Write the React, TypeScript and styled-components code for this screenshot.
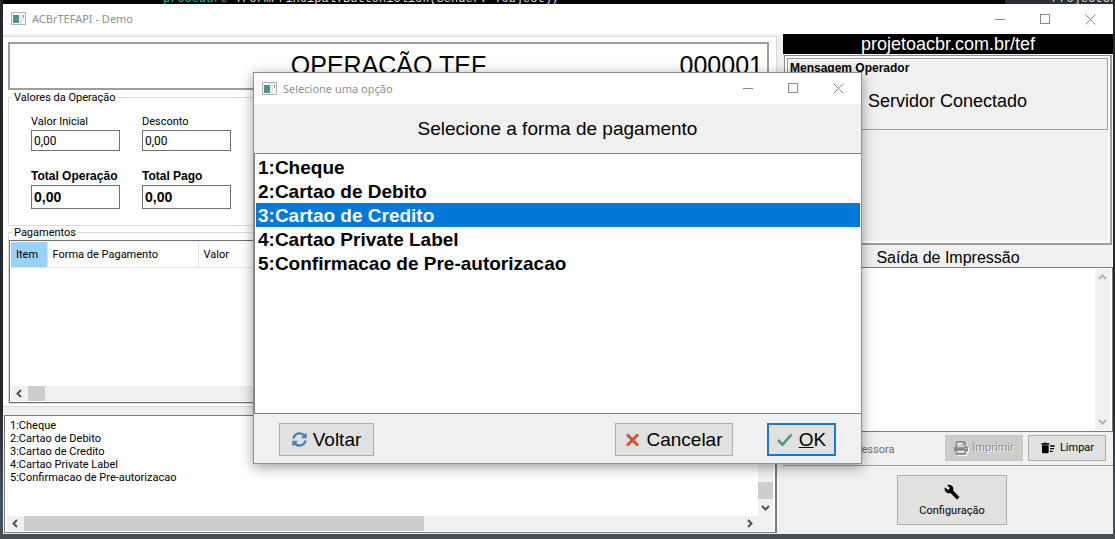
import React, { useState } from "react";
import styled, { createGlobalStyle, css } from "styled-components";
import { FaPrint, FaSyncAlt } from "react-icons/fa";
import { MdBuild, MdDeleteSweep } from "react-icons/md";

const ui = `Roboto, "Open Sans", sans-serif`;
const caption = `"Noto Sans", "Open Sans", sans-serif`;
const sans = `"Liberation Sans", Arial, sans-serif`;
const mono = `"Liberation Mono", monospace`;

const GlobalStyle = createGlobalStyle`
  * { box-sizing: border-box; }
  body { margin: 0; background: #43505a; color: #000; font: 11px/13px ${ui}; }
  button, input, textarea { font: inherit; color: inherit; margin: 0; border-radius: 0; }
`;

const Desktop = styled.div`
  display: flex;
  flex-direction: column;
  min-height: 100vh;
  padding: 0 2px 5px 3px;
  background: linear-gradient(#24262b, #25282d 75%, #43505a 92%);
`;

const EditorStrip = styled.div`
  display: flex;
  align-items: flex-end;
  height: 4px;
  overflow: hidden;
  padding-left: 160px;
  background: #050505;
  color: #d8d8d8;
  font: 12px/10px ${mono};
  white-space: pre;
`;

const Keyword = styled.span`
  color: #22b8a4;
`;

const ProjectTab = styled.span`
  margin-left: auto;
  width: 108px;
  padding-left: 47px;
  background: #2b3038;
`;

const MainWindow = styled.main`
  position: relative;
  flex: 1;
  display: flex;
  flex-direction: column;
  background: #f0f0f0;
`;

const TitleBar = styled.header<{ $compact?: boolean }>`
  display: flex;
  align-items: center;
  gap: 5px;
  height: ${(p) => (p.$compact ? 31 : 30)}px;
  padding-left: 8px;
  background: #fff;
  color: #8f8f8f;
  font: 11px/16px ${caption};
`;

const TitleText = styled.h1`
  flex: 1;
  margin: 0;
  font: inherit;
`;

const CaptionGroup = styled.div`
  display: flex;
`;

const CaptionButton = styled.button`
  display: flex;
  justify-content: center;
  width: 45px;
  padding: 0;
  border: 0;
  background: none;
  color: #8a8a8a;
`;

const Body = styled.div`
  flex: 1;
  display: flex;
  gap: 6px;
`;

const LeftColumn = styled.div`
  flex: 1;
  display: flex;
  flex-direction: column;
  gap: 8px;
  padding: 2px 0 1px;
`;

const RightColumn = styled.aside`
  flex: 0 0 330px;
  display: flex;
  flex-direction: column;
`;

const Sheet = styled.section`
  flex: 1;
  display: flex;
  flex-direction: column;
  padding: 5px 7px 2px 5px;
  border: 1px solid #dadada;
  border-left: 0;
  background: #fff;
`;

const OperationBanner = styled.div`
  display: grid;
  grid-template-columns: 1fr auto 1fr;
  height: 48px;
  padding: 6px 4px 0;
  border: 2px solid #9d9d9d;
  font: 25px/30px ${sans};
`;

const OperationNumber = styled.span`
  text-align: right;
`;

const Group = styled.fieldset<{ $grow?: boolean }>`
  min-width: 0;
  margin: 0;
  padding: 0;
  border: 1px solid #dcdcdc;
  ${(p) =>
    p.$grow
      ? css`
          flex: 1;
          display: flex;
          flex-direction: column;
          padding-top: 1px;
        `
      : css`
          height: 135px;
          margin-top: 1px;
        `}
`;

const Legend = styled.legend`
  margin-left: 3px;
  padding: 0 2px;
`;

const FieldRow = styled.div<{ $total?: boolean }>`
  display: flex;
  gap: 22px;
  padding: ${(p) => (p.$total ? 18 : 11)}px 22px 0;
`;

const Field = styled.label<{ $total?: boolean }>`
  display: flex;
  flex-direction: column;
  gap: 2px;
  width: 89px;
  white-space: nowrap;
  font: ${(p) => (p.$total ? `bold 12px/14px ${sans}` : `11px/13px ${ui}`)};
`;

const FieldInput = styled.input<{ $total?: boolean }>`
  width: 100%;
  height: ${(p) => (p.$total ? 24 : 21)}px;
  padding: 0 2px;
  border: 1px solid #707070;
  background: #fff;
  font-size: ${(p) => (p.$total ? 14 : 12)}px;
`;

const GridFrame = styled.div`
  flex: 1;
  display: flex;
  flex-direction: column;
  justify-content: space-between;
  padding: 1px;
  border: 1px solid #6e6e6e;
`;

const PaymentsTable = styled.table`
  width: 100%;
  border-collapse: collapse;
  table-layout: fixed;
`;

const HeadCell = styled.th<{ $width?: number; $active?: boolean }>`
  width: ${(p) => (p.$width ? `${p.$width}px` : "auto")};
  height: 25px;
  padding: 0 5px;
  border-right: 1px solid #e5e5e5;
  border-bottom: 1px solid #e5e5e5;
  background: ${(p) => (p.$active ? "#99d1ff" : "#fff")};
  font-weight: normal;
  text-align: left;
  white-space: nowrap;
`;

const HScroll = styled.div`
  display: flex;
  align-items: center;
  height: 15px;
  background: #f0f0f0;
`;

const VScroll = styled.div`
  display: flex;
  flex-direction: column;
  align-items: center;
  width: 15px;
  background: #f0f0f0;
`;

const Thumb = styled.span<{ $w: number; $h: number }>`
  width: ${(p) => p.$w}px;
  height: ${(p) => p.$h}px;
  background: #cdcdcd;
`;

const Spacer = styled.span`
  flex: 1;
`;

const ScrollButton = styled.button<{ $dim?: boolean }>`
  display: flex;
  align-items: center;
  justify-content: center;
  width: 17px;
  height: 17px;
  padding: 0;
  border: 0;
  background: none;
  color: ${(p) => (p.$dim ? "#b4b4b4" : "#505050")};
`;

const LogFrame = styled.section`
  display: grid;
  grid-template: 1fr 15px / 1fr 15px;
  height: 118px;
  margin-left: 1px;
  padding: 1px 2px;
  border: 1px solid #7a7a7a;
  border-right-width: 2px;
  background: #fff;
`;

const LogText = styled.textarea`
  padding: 2px 3px;
  border: 0;
  background: #fff;
  resize: none;
  overflow: hidden;
  outline: 0;
`;

const Corner = styled.span`
  background: #f0f0f0;
`;

const SiteLink = styled.a`
  height: 20px;
  background: #000;
  color: #fff;
  font: 18px/20px ${sans};
  text-align: center;
  text-decoration: none;
`;

const MessageFrame = styled.section`
  height: 190px;
  margin: 1px 1px 0;
  padding: 2px;
  border: 1px solid #8c8c8c;
  border-right: 2px solid #9d9d9d;
  border-bottom: 2px solid #9d9d9d;
  box-shadow: inset 0 0 0 2px #fff;
`;

const MessageBox = styled.div`
  height: 72px;
  padding: 2px 2px 0;
  border: 1px solid #9d9d9d;
  box-shadow: inset 1px 1px #fff;
`;

const MessageTitle = styled.h2`
  margin: 0;
  font: bold 12px/14px ${sans};
`;

const MessageText = styled.p`
  margin: 14px 0 0;
  font: 18px/24px ${sans};
  text-align: center;
`;

const PrintTitle = styled.h2`
  margin: 0;
  height: 22px;
  font: 16px/25px ${sans};
  text-align: center;
`;

const PrintArea = styled.div`
  flex: 1;
  display: flex;
  padding: 1px 2px;
  border: 1px solid #7a7a7a;
  background: #fff;
`;

const PrintText = styled(LogText)`
  flex: 1;
`;

const PrintBar = styled.div`
  display: flex;
  align-items: center;
  gap: 5px;
  height: 34px;
  padding: 0 7px 2px 0;
  border-bottom: 1px solid #9d9d9d;
`;

const PrinterName = styled.span`
  flex: 1;
  padding: 4px 0 0 56px;
  color: #6d6d6d;
`;

const ToolButton = styled.button`
  display: flex;
  align-items: center;
  justify-content: center;
  gap: 4px;
  width: 78px;
  height: 26px;
  padding: 0;
  border: 1px solid #adadad;
  background: #e1e1e1;
  &:disabled {
    border-color: #c6c6c6;
    background: #cccccc;
    color: #8b8b8b;
    text-shadow: 1px 1px #fff;
  }
  &:disabled svg {
    filter: drop-shadow(1px 1px #fff);
  }
`;

const ConfigBar = styled.div`
  display: flex;
  justify-content: center;
  padding: 9px 0 9px 8px;
`;

const ConfigButton = styled(ToolButton)`
  flex-direction: column;
  gap: 4px;
  width: 110px;
  height: 50px;
`;

const Dialog = styled.section`
  position: absolute;
  top: 68px;
  right: 251px;
  bottom: 70px;
  left: 250px;
  display: flex;
  flex-direction: column;
  border: 1px solid #8f8f8f;
  background: #f0f0f0;
  box-shadow: 0 3px 12px rgba(0, 0, 0, 0.4);
`;

const Prompt = styled.h2`
  margin: 0;
  height: 49px;
  font: 19px/49px ${sans};
  text-align: center;
`;

const OptionList = styled.div`
  flex: 1;
  padding: 1px;
  border-top: 1px solid #828282;
  border-bottom: 1px solid #828282;
  border-left: 1px solid #828282;
  background: #fff;
`;

const Option = styled.label`
  display: block;
  height: 24px;
  padding-left: 2px;
  font: bold 19px/26px ${sans};
  &:has(input:checked) {
    background: #0078d7;
    color: #fff;
  }
`;

const OptionRadio = styled.input`
  position: absolute;
  opacity: 0;
  pointer-events: none;
`;

const DialogFooter = styled.footer`
  display: flex;
  align-items: center;
  gap: 34px;
  height: 49px;
  padding: 2px 25px 0;
`;

const DialogButton = styled.button<{ $width: number; $default?: boolean }>`
  display: flex;
  align-items: center;
  justify-content: center;
  gap: 6px;
  width: ${(p) => p.$width}px;
  height: 33px;
  padding: 0;
  border: ${(p) => (p.$default ? "2px solid #1c78c4" : "1px solid #adadad")};
  background: #e1e1e1;
  font: 19px/24px ${sans};
`;

function AppIcon() {
  return (
    <svg width="16" height="14" viewBox="0 0 16 14" aria-hidden="true">
      <rect x="0.5" y="0.5" width="14" height="12" fill="#f4f6f7" stroke="#a9b3b9" />
      <rect x="2" y="3" width="6" height="8" fill="#4f8f8c" />
      <rect x="9" y="3" width="2" height="8" fill="#dfe5e8" />
      <rect x="12" y="3" width="1" height="3" fill="#8e9aa2" />
    </svg>
  );
}

function CaptionButtons() {
  return (
    <CaptionGroup>
      <CaptionButton aria-label="Minimizar">
        <svg width="11" height="11"><path d="M0 5.5H10" stroke="currentColor" /></svg>
      </CaptionButton>
      <CaptionButton aria-label="Maximizar">
        <svg width="11" height="11"><rect x="0.5" y="0.5" width="9" height="9" fill="none" stroke="currentColor" /></svg>
      </CaptionButton>
      <CaptionButton aria-label="Fechar">
        <svg width="11" height="11"><path d="M0.5 0.5L10.5 10.5M10.5 0.5L0.5 10.5" fill="none" stroke="currentColor" /></svg>
      </CaptionButton>
    </CaptionGroup>
  );
}

const chevrons = {
  left: "M6 1L2.5 4.5L6 8",
  right: "M3 1L6.5 4.5L3 8",
  up: "M1 6L4.5 2.5L8 6",
  down: "M1 3L4.5 6.5L8 3",
};

const arrowNames = {
  left: "Rolar à esquerda",
  right: "Rolar à direita",
  up: "Rolar acima",
  down: "Rolar abaixo",
};

function Arrow({ to, dim }: { to: keyof typeof chevrons; dim?: boolean }) {
  return (
    <ScrollButton $dim={dim} aria-label={arrowNames[to]}>
      <svg width="9" height="9">
        <path d={chevrons[to]} fill="none" stroke="currentColor" strokeWidth="2" />
      </svg>
    </ScrollButton>
  );
}

const options = [
  "1:Cheque",
  "2:Cartao de Debito",
  "3:Cartao de Credito",
  "4:Cartao Private Label",
  "5:Confirmacao de Pre-autorizacao",
];

function OperationValues() {
  return (
    <Group>
      <Legend>Valores da Operação</Legend>
      <FieldRow>
        <Field>Valor Inicial<FieldInput defaultValue="0,00" /></Field>
        <Field>Desconto<FieldInput defaultValue="0,00" /></Field>
      </FieldRow>
      <FieldRow $total>
        <Field $total>Total Operação<FieldInput $total readOnly value="0,00" /></Field>
        <Field $total>Total Pago<FieldInput $total readOnly value="0,00" /></Field>
      </FieldRow>
    </Group>
  );
}

function Payments() {
  return (
    <Group $grow>
      <Legend>Pagamentos</Legend>
      <GridFrame>
        <PaymentsTable>
          <thead>
            <tr>
              <HeadCell $width={36} $active>Item</HeadCell>
              <HeadCell $width={151}>Forma de Pagamento</HeadCell>
              <HeadCell>Valor</HeadCell>
            </tr>
          </thead>
        </PaymentsTable>
        <HScroll>
          <Arrow to="left" />
          <Thumb $w={17} $h={15} />
          <Spacer />
          <Arrow to="right" />
        </HScroll>
      </GridFrame>
    </Group>
  );
}

function OptionDialog() {
  const [choice, setChoice] = useState(2);
  return (
    <Dialog role="dialog" aria-label="Selecione uma opção">
      <TitleBar $compact>
        <AppIcon />
        <TitleText as="h2">Selecione uma opção</TitleText>
        <CaptionButtons />
      </TitleBar>
      <Prompt>Selecione a forma de pagamento</Prompt>
      <OptionList role="radiogroup" aria-label="Forma de pagamento">
        {options.map((text, i) => (
          <Option key={text}>
            <OptionRadio type="radio" name="forma" checked={choice === i} onChange={() => setChoice(i)} />
            {text}
          </Option>
        ))}
      </OptionList>
      <DialogFooter>
        <DialogButton $width={95}>
          <FaSyncAlt size={15} color="#4d7fb0" />
          Voltar
        </DialogButton>
        <Spacer />
        <DialogButton $width={118}>
          <svg width="15" height="14" viewBox="0 0 15 14">
            <path d="M2 1.5L13 12.5M13 1.5L2 12.5" stroke="#cf5337" strokeWidth="3" />
          </svg>
          Cancelar
        </DialogButton>
        <DialogButton $width={69} $default>
          <svg width="16" height="14" viewBox="0 0 16 14">
            <path d="M1 7L5.500 11.500L14.500 1.500" fill="none" stroke="#4b9c7c" strokeWidth="2.600" />
          </svg>
          <span><u>O</u>K</span>
        </DialogButton>
      </DialogFooter>
    </Dialog>
  );
}

export default function App() {
  return (
    <Desktop>
      <GlobalStyle />
      <EditorStrip aria-hidden="true">
        <Keyword>procedure</Keyword> TFormPrincipal.Button1Click(Sender: TObject);
        <ProjectTab>ProjectGroup</ProjectTab>
      </EditorStrip>
      <MainWindow>
        <TitleBar>
          <AppIcon />
          <TitleText>ACBrTEFAPI - Demo</TitleText>
          <CaptionButtons />
        </TitleBar>
        <Body>
          <LeftColumn>
            <Sheet>
              <OperationBanner>
                <span />
                <span>OPERAÇÃO TEF</span>
                <OperationNumber>000001</OperationNumber>
              </OperationBanner>
              <OperationValues />
              <Payments />
            </Sheet>
            <LogFrame>
              <LogText readOnly aria-label="Log" value={options.join("\n")} />
              <VScroll>
                <Arrow to="up" />
                <Spacer />
                <Thumb $w={15} $h={17} />
                <Arrow to="down" />
              </VScroll>
              <HScroll>
                <Arrow to="left" />
                <Thumb $w={400} $h={15} />
                <Spacer />
                <Arrow to="right" />
              </HScroll>
              <Corner />
            </LogFrame>
          </LeftColumn>
          <RightColumn>
            <SiteLink href="#tef">projetoacbr.com.br/tef</SiteLink>
            <MessageFrame>
              <MessageBox>
                <MessageTitle>Mensagem Operador</MessageTitle>
                <MessageText>Servidor Conectado</MessageText>
              </MessageBox>
            </MessageFrame>
            <PrintTitle>Saída de Impressão</PrintTitle>
            <PrintArea>
              <PrintText readOnly aria-label="Saída de Impressão" value="" />
              <VScroll>
                <Arrow to="up" dim />
                <Spacer />
                <Arrow to="down" dim />
              </VScroll>
            </PrintArea>
            <PrintBar>
              <PrinterName>Impressora</PrinterName>
              <ToolButton disabled>
                <FaPrint size={14} />
                Imprimir
              </ToolButton>
              <ToolButton>
                <MdDeleteSweep size={16} />
                Limpar
              </ToolButton>
            </PrintBar>
            <ConfigBar>
              <ConfigButton>
                <MdBuild size={16} />
                Configuração
              </ConfigButton>
            </ConfigBar>
          </RightColumn>
        </Body>
        <OptionDialog />
      </MainWindow>
    </Desktop>
  );
}
